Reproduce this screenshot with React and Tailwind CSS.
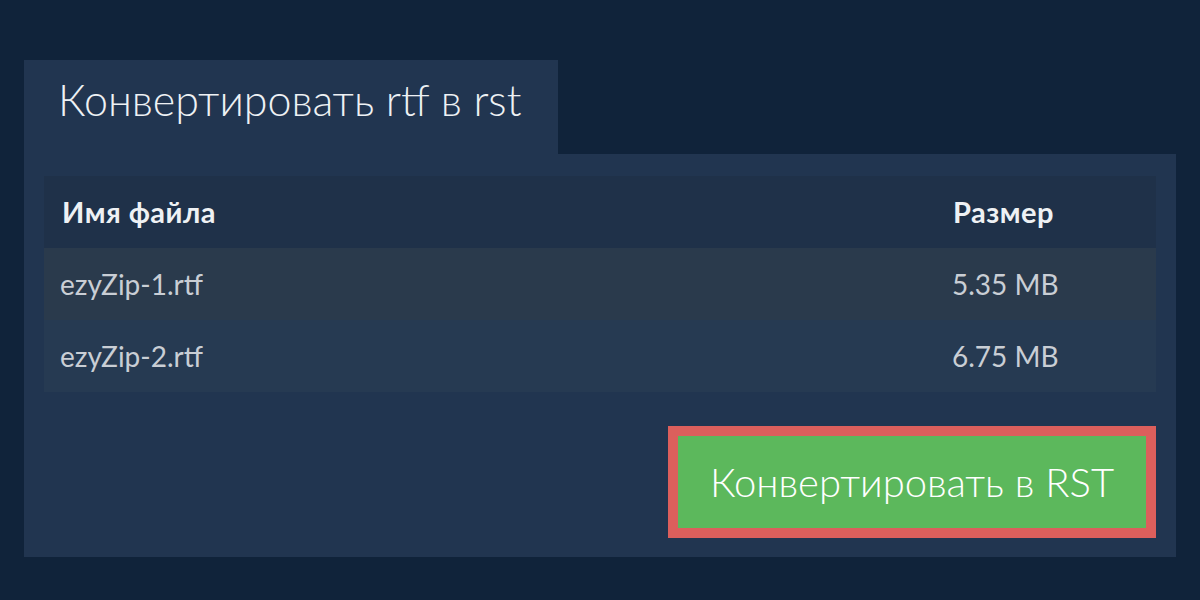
export default function App() {
  const files = [
    { name: "ezyZip-1.rtf", size: "5.35 MB", bg: "bg-[#2a3a4c]" },
    { name: "ezyZip-2.rtf", size: "6.75 MB", bg: "bg-[#263a52]" },
  ];

  return (
    <div className="w-[1200px] h-[600px] bg-[#10233a] px-6 pt-[60px] font-['Lato','Noto_Sans',sans-serif]">
      {/* tab */}
      <div className="w-[534px] h-[94px] bg-[#213550] pl-[34px] pt-[12px]">
        <h1 className="text-[43px] font-light text-[#eef1f4] leading-[56px]">Конвертировать rtf в rst</h1>
      </div>

      {/* panel */}
      <div className="bg-[#213550] px-5 pt-[22px] pb-[19px]">
        <div className="bg-[#1f3149]">
          <div className="flex h-[72px] items-center text-[29px] tracking-[0.5px] font-bold text-[#eef1f4]">
            <div className="flex-1 pl-[18px]">Имя файла</div>
            <div className="w-[203px]">Размер</div>
          </div>
          {files.map((f) => (
            <div key={f.name} className={`flex h-[72px] items-center text-[28px] text-[#c9ced5] ${f.bg}`}>
              <div className="flex-1 pl-4">{f.name}</div>
              <div className="w-[204px]">{f.size}</div>
            </div>
          ))}
        </div>

        <div className="flex justify-end mt-[34px]">
          <button className="w-[488px] h-[112px] border-[10px] border-[#dc5f5c] bg-[#5cb85c] text-white text-[40px] font-light">
            Конвертировать в RST
          </button>
        </div>
      </div>
    </div>
  );
}
